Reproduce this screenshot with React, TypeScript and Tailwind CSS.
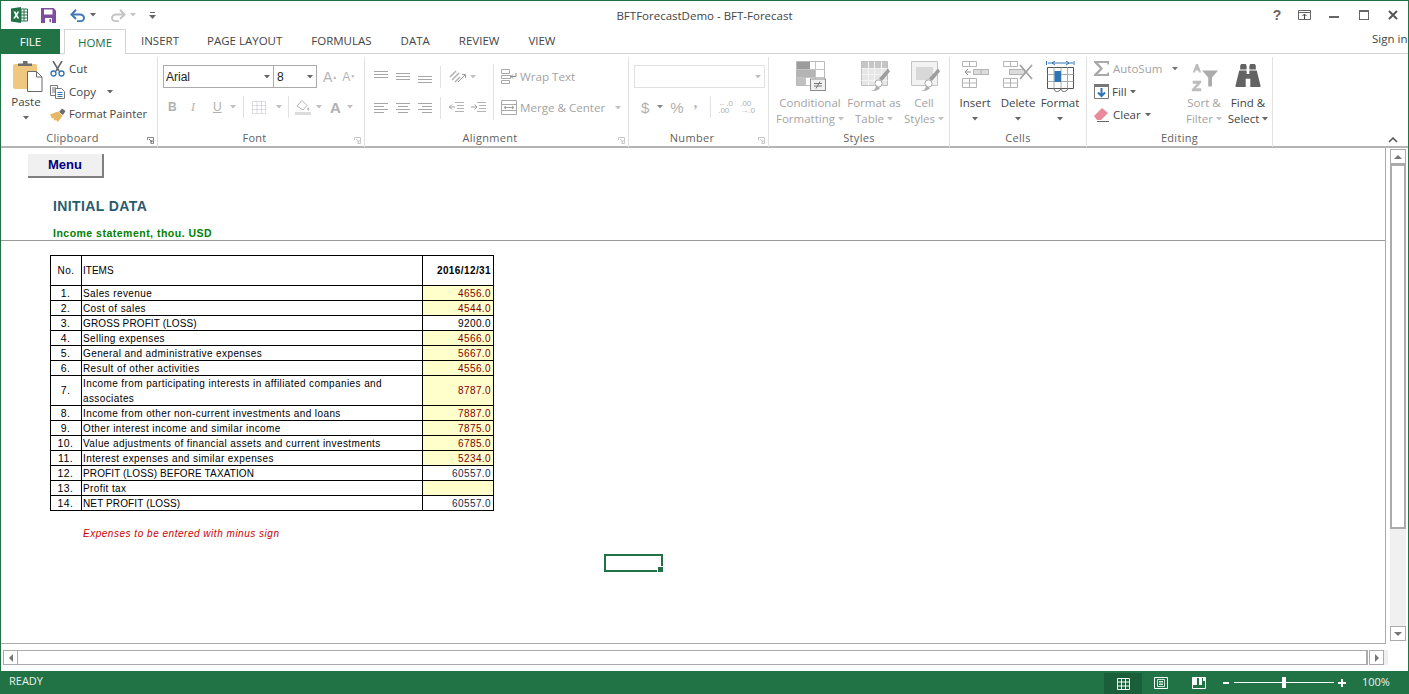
import React from "react";

const UI = "font-['Open_Sans','Noto_Sans',sans-serif]";

const Caret = ({ c = "#8a8a8a", className = "" }: { c?: string; className?: string }) => (
  <svg width="6" height="3.500" viewBox="0 0 7 4" className={"shrink-0 " + className}><path d="M0 0h7L3.500 4z" fill={c} /></svg>
);

const ExcelLogo = () => (
  <svg width="17" height="16" viewBox="0 0 17 16">
    <path d="M0 1.500 10 0v16L0 14.500z" fill="#217346" />
    <path d="M10 2h6.500v12H10z" fill="#fff" stroke="#217346" />
    <path d="M10 5h6.500M10 8h6.500M10 11h6.500M13 2v12" stroke="#217346" />
    <path d="M2.500 4.500h2L5.300 6.500 6.300 4.500h1.900L6.300 8l2 3.500H6.300L5.200 9.400 4.200 11.500h-2L4.300 8z" fill="#fff" />
  </svg>
);
const SaveIcon = () => (
  <svg width="15" height="15" viewBox="0 0 15 15">
    <path d="M0 0h12.500L15 2.500V15H0z" fill="#7e4d9e" />
    <path d="M3 1.500h8.500v5H3z" fill="#fff" />
    <path d="M4 10h7v5H4z" fill="#fff" />
    <path d="M8.500 11h1.500v3H8.500z" fill="#7e4d9e" />
  </svg>
);
const UndoIcon = ({ c }: { c: string }) => (
  <svg width="16" height="13" viewBox="0 0 16 13" fill="none">
    <path d="M2 5.500h8a4 3.400 0 0 1 0 6.800H7" stroke={c} strokeWidth="2" />
    <path d="M6 .8 1.500 5.500 6 10" stroke={c} strokeWidth="2" />
  </svg>
);
const RedoIcon = ({ c }: { c: string }) => (
  <svg width="16" height="13" viewBox="0 0 16 13" fill="none">
    <path d="M14 5.500H6a4 3.400 0 0 0 0 6.800h3" stroke={c} strokeWidth="2" />
    <path d="M10 .8l4.500 4.700L10 10" stroke={c} strokeWidth="2" />
  </svg>
);

const PasteIcon = () => (
  <svg width="30" height="32" viewBox="0 0 30 32">
    <rect x="0" y="3" width="24" height="25" rx="2" fill="#f0c77e" />
    <path d="M5 5V2.500h5V0h4.500v2.500H19V5z" fill="#6d6d6d" />
    <path d="M14.500 10.500h9l5.500 5.500v14.500H14.500z" fill="#fff" stroke="#6a6a6a" />
    <path d="M23.500 10.500v5.500H29" fill="none" stroke="#6a6a6a" />
  </svg>
);
const CutIcon = () => (
  <svg width="15" height="16" viewBox="0 0 15 16" fill="none">
    <path d="M3 0l6 10M12 0 6 10" stroke="#666" strokeWidth="1.600" />
    <circle cx="3.500" cy="12.500" r="2.500" stroke="#2f75b5" strokeWidth="1.300" />
    <circle cx="11.500" cy="12.500" r="2.500" stroke="#2f75b5" strokeWidth="1.300" />
  </svg>
);
const CopyIcon = () => (
  <svg width="15" height="14" viewBox="0 0 15 14" fill="none">
    <path d="M.5.500h7v10h-7z" stroke="#777" fill="#fff" />
    <path d="M2 3h4M2 5h3M2 7h3" stroke="#777" />
    <path d="M5.500 3.500h6l3 3v7h-9z" stroke="#777" fill="#fff" />
    <path d="M7.500 7.500h5M7.500 9.500h5M7.500 11.500h5" stroke="#2f75b5" />
  </svg>
);
const PainterIcon = () => (
  <svg width="16" height="14" viewBox="0 0 16 14">
    <path d="M9 4l3-3.500L15.500 3 13 7z" fill="#6d6d6d" />
    <path d="M0 6.500 8 3.500l4.500 4.500L8 14 6 12l-2 .5L3.500 10 2 10.500z" fill="#e8b765" />
  </svg>
);

const Div = ({ className = "" }: { className?: string }) => <div className={"w-px h-[22px] bg-[#e1e1e1] shrink-0 " + className} />;

const Launcher = ({ faded }: { faded?: boolean }) => (
  <svg width="7" height="7" viewBox="0 0 7 7" className="shrink-0" fill="none">
    <path d="M.5 3V.5H6.500V6.500H3.500" stroke={faded ? "#c8c8c8" : "#8a8a8a"} />
    <path d="M2 2l3 3M3 5h2V3" stroke={faded ? "#c8c8c8" : "#6a6a6a"} />
  </svg>
);

const Group = ({ w, label, launcher, faded, children }: { w: string; label: string; launcher?: boolean; faded?: boolean; children: React.ReactNode }) => (
  <div className={w + " shrink-0 h-[90px] flex flex-col relative border-r border-[#e1e1e1] mt-[3px]"}>
    <div className="h-[73px] overflow-hidden">{children}</div>
    <div className={"h-[17px] flex items-center justify-center text-[11px] leading-none tracking-[0.3px] text-[#5f5f5f] pb-[3px] " + (launcher ? "pr-[13px]" : "")}>{label}</div>
    {launcher && <div className="absolute right-[3px] bottom-[3px]"><Launcher faded={faded} /></div>}
  </div>
);

const Lines = ({ ys, xs }: { ys: number[]; xs: [number, number][] }) => (
  <svg width="15" height="13" viewBox="0 0 15 13">
    {ys.map((y, i) => <rect key={i} x={xs[i][0]} y={y} width={xs[i][1]} height="1" fill="#a6a6a6" />)}
  </svg>
);

const BigLabel = ({ lines, dim, caretInline }: { lines: string[]; dim?: boolean; caretInline?: boolean }) => (
  <div className={"text-[11.5px] leading-[16px] text-center whitespace-nowrap " + (dim ? "text-[#a3a3a3]" : "text-[#444]")}>
    <div>{lines[0]}</div>
    {lines[1] && <div className="flex items-center justify-center gap-[3px]">{lines[1]}{caretInline && <Caret c={dim ? "#c0c0c0" : "#666"} />}</div>}
  </div>
);

const CondIcon = () => (
  <svg width="30" height="30" viewBox="0 0 30 30">
    <g fill="#fff" stroke="#b9b9b9"><path d="M.5.500h28v24H.5z" /></g>
    <path d="M.5 8.500h28M.5 16.500h28M9.500.500v24M19.500.500v24" stroke="#c4c4c4" />
    <rect x="1" y="1" width="13" height="7" fill="#9c9c9c" /><rect x="1" y="9" width="18" height="7" fill="#b4b4b4" /><rect x="1" y="17" width="8" height="7" fill="#c0c0c0" />
    <rect x="14.500" y="18" width="15" height="11.500" fill="#f1f1f1" stroke="#8c8c8c" />
    <path d="M18 22.500h8M18 25h8M24 20.500l-4 7" stroke="#777" fill="none" />
  </svg>
);
const TableIcon = () => (
  <svg width="30" height="30" viewBox="0 0 30 30">
    <path d="M.5.500h26v24H.5z" fill="#e6e6e6" stroke="#bdbdbd" />
    <rect x="1" y="1" width="25" height="6" fill="#c6c6c6" />
    <path d="M.5 7.500h26M.5 13.500h26M.5 19.500h26M7.500.500v24M13.500.500v24M20.500.500v24" stroke="#f4f4f4" />
    <path d="M29 10.500 21 20l-3-2.500L27 7.500z" fill="#9d9d9d" />
    <circle cx="17.500" cy="22.500" r="3.600" fill="#fff" stroke="#a8a8a8" />
    <path d="M9 30c5 0 6-4 6-6l4 3c-2 3-6 3-10 3z" fill="#b0b0b0" />
  </svg>
);
const StylesIcon = () => (
  <svg width="30" height="30" viewBox="0 0 30 30">
    <path d="M.5.500h26v24H.5z" fill="#f2f2f2" stroke="#c4c4c4" />
    <rect x="5" y="6" width="17" height="13" fill="#d8d8d8" />
    <path d="M29 10.500 21 20l-3-2.500L27 7.500z" fill="#9d9d9d" />
    <circle cx="17.500" cy="22.500" r="3.600" fill="#fff" stroke="#a8a8a8" />
    <path d="M9 30c5 0 6-4 6-6l4 3c-2 3-6 3-10 3z" fill="#b0b0b0" />
  </svg>
);
const InsertIcon = () => (
  <svg width="27" height="27" viewBox="0 0 27 27" fill="none">
    <path d="M.5.500h14v5H.5zM7.500.500v5M.5 17.500h14v9H.5zM.5 22h14M7.500 17.500v9" stroke="#b5b5b5" />
    <rect x="11.500" y="8.500" width="15" height="5" fill="#dcdcdc" stroke="#b5b5b5" />
    <path d="M19 9v4" stroke="#b5b5b5" />
    <path d="M3 11h6M6 8 3 11l3 3" stroke="#8f8f8f" />
  </svg>
);
const DeleteIcon = () => (
  <svg width="30" height="27" viewBox="0 0 30 27" fill="none">
    <path d="M.5.500h14v5H.5zM7.500.500v5M.5 17.500h14v9H.5zM.5 22h14M7.500 17.500v9" stroke="#b5b5b5" />
    <rect x="6.500" y="8.500" width="15" height="5" fill="#dcdcdc" stroke="#b5b5b5" />
    <path d="M17 4l12 14M29 4 17 18" stroke="#a3a3a3" strokeWidth="1.800" />
  </svg>
);
const FormatIcon = () => (
  <svg width="29" height="33" viewBox="0 0 29 33" fill="none">
    <path d="M.5 0v4M28 0v4M2 2h25" stroke="#2f75b5" />
    <path d="M6 2l3-2M6 2l3 2M23 2l-3-2M23 2l-3 2" stroke="#2f75b5" />
    <path d="M1.500 6.500h26v21h-26z" stroke="#555" fill="#fff" />
    <path d="M1.500 13.500h26M1.500 20.500h26M8 6.500v21M15 6.500v21M21.500 6.500v21" stroke="#aaa" />
    <rect x="8.500" y="10" width="6.500" height="11" fill="#2f75b5" />
    <path d="M8 28c1 3 3 3 5 2l2-2M15 28c1 3 3 3 5 2l2-2" stroke="#666" />
  </svg>
);
const Funnel = () => (
  <svg width="30" height="30" viewBox="0 0 32 30">
    <path d="M4 9 7.500 0h2L13 9h-2.500l-.6-2H7l-.6 2z" fill="#bdbdbd" />
    <path d="M4 18h9v2l-5.500 6H13v3H3v-2l5.500-6H4z" fill="#bdbdbd" />
    <path d="M14 7h17l-6.500 7.500V24h-4v-9.500z" fill="#ababab" />
  </svg>
);
const Binoc = () => (
  <svg width="26" height="23" viewBox="0 0 27 25" fill="#636363">
    <path d="M5 2l1-2h5l1 2v4H5zM15 2l1-2h5l1 2v4h-7z" />
    <path d="M4 7h8v4h3V7h8l4 16v2H16v-9h-5v9H0v-2z" />
  </svg>
);
const Sigma = () => <svg width="16" height="15" viewBox="0 0 16 15"><path d="M0 0h15v3.500h-1.500L13 2H4l5 5.500L4 13h9l.5-1.500H15V15H0v-1.500L6 7.500 0 1.500z" fill="#a9a9a9" /></svg>;
const FillIcon = () => (
  <svg width="15" height="15" viewBox="0 0 15 15" fill="none">
    <path d="M.5.500h14v14H.5z" stroke="#777" fill="#fff" /><rect x="0" y="0" width="15" height="3" fill="#777" />
    <path d="M7.500 4v8M4 8.500l3.500 3.500L11 8.500" stroke="#2f75b5" strokeWidth="2" />
  </svg>
);
const Eraser = () => (
  <svg width="15" height="14" viewBox="0 0 15 14">
    <path d="M0 8 8 0l6 5-7 7H3z" fill="#e88a9c" /><path d="M3 13.500h12" stroke="#666" />
  </svg>
);

const rows: [string, string, string, string, number?][] = [
  ["1.", "Sales revenue", "4656.0", "i"],
  ["2.", "Cost of sales", "4544.0", "i"],
  ["3.", "GROSS PROFIT (LOSS)", "9200.0", "k"],
  ["4.", "Selling expenses", "4566.0", "i"],
  ["5.", "General and administrative expenses", "5667.0", "i"],
  ["6.", "Result of other activities", "4556.0", "i"],
  ["7.", "Income from participating interests in affiliated companies and associates", "8787.0", "i", 30],
  ["8.", "Income from other non-current investments and loans", "7887.0", "i"],
  ["9.", "Other interest income and similar income", "7875.0", "i"],
  ["10.", "Value adjustments of financial assets and current investments", "6785.0", "i"],
  ["11.", "Interest expenses and similar expenses", "5234.0", "i"],
  ["12.", "PROFIT (LOSS) BEFORE TAXATION", "60557.0", "n"],
  ["13.", "Profit tax", "", "i"],
  ["14.", "NET PROFIT (LOSS)", "60557.0", "n"],
];

const td = "border border-black p-0";
const valueClass: Record<string, string> = {
  i: "bg-[#ffffcc] text-[#800000]",
  k: "text-black",
  n: "text-[#1a2a4a]",
};

function DataTable() {
  return (
    <table className="table-fixed border-collapse w-[443px] text-[10px] leading-[13px] text-black tracking-[0.4px] font-['Liberation_Sans',Arial,sans-serif]">
      <colgroup><col className="w-[31px]" /><col className="w-[341px]" /><col className="w-[71px]" /></colgroup>
      <tbody>
        <tr className="h-[30px]">
          <td className={td + " text-center"}>No.</td>
          <td className={td + " pl-[1px] tracking-normal"}>ITEMS</td>
          <td className={td + " text-right pr-[2px] font-bold"}>2016/12/31</td>
        </tr>
        {rows.map(([n, t, v, kind, h]) => (
          <tr key={n} className={h ? "h-[30px]" : "h-[15px]"}>
            <td className={td + " text-center text-[10.5px] pr-px " + (h ? "" : "pt-px")}>{n}</td>
            <td className={td + " pl-[1px] pr-[30px] " + (h ? "leading-[14.5px]" : "pt-px ") + (kind === "i" ? "" : "tracking-[0.12px]")}>
              {h ? <span className="block translate-y-px">{t}</span> : t}
            </td>
            <td className={td + " text-right pr-[2px] " + (h ? "" : "pt-px ") + valueClass[kind]}>{v}</td>
          </tr>
        ))}
      </tbody>
    </table>
  );
}

export default function App() {
  return (
    <div className={"w-[1409px] h-[694px] flex flex-col bg-white overflow-hidden " + UI}>
      <div className="flex-1 min-h-0 flex flex-col border-x border-t border-[#217346]">
        {/* title bar */}
        <div className="h-[28px] shrink-0 flex items-center relative pl-[10px]">
          <ExcelLogo />
          <div className="ml-[13px]"><SaveIcon /></div>
          <div className="ml-[14px]"><UndoIcon c="#3f78b5" /></div>
          <Caret c="#666" className="ml-[4px]" />
          <div className="ml-[14px]"><RedoIcon c="#c4c4c4" /></div>
          <Caret c="#c4c4c4" className="ml-[4px]" />
          <svg width="7" height="7" viewBox="0 0 7 7" className="ml-[13px]"><path d="M1 0h5v1H1zM0 3h7L3.500 7z" fill="#666" /></svg>
          <div className="absolute left-0 right-0 top-[7px] text-center text-[11.5px] leading-[16px] text-[#444] pointer-events-none">BFTForecastDemo - BFT-Forecast</div>
          <div className="ml-auto flex items-center text-[#666]">
            <span className="text-[14px] font-bold leading-none w-[14px] text-center font-['Liberation_Sans',sans-serif]">?</span>
            <svg width="13" height="10" viewBox="0 0 13 10" className="ml-[14px]" fill="none"><path d="M.5.500h12v9H.5z" stroke="#666" /><path d="M.5 2.500h12" stroke="#666" /><path d="M6.500 9V4.500M4.500 6l2-2 2 2" stroke="#444" /></svg>
            <div className="ml-[18px] w-[10px] h-[2px] bg-[#666] mt-[3px]" />
            <div className="ml-[20px] w-[10px] h-[10px] border border-[#666] border-t-[2px]" />
            <svg width="10" height="10" viewBox="0 0 10 10" className="ml-[19px] mr-[10px]"><path d="M1 1l8 8M9 1 1 9" stroke="#555" strokeWidth="2" /></svg>
          </div>
        </div>

        {/* tabs */}
        <div className="h-[25px] shrink-0 flex items-end text-[11.5px] text-[#444] border-b border-[#d4d4d4] relative">
          <div className="w-[59px] h-[25px] pt-px bg-[#217346] text-white flex items-center justify-center -mb-px">FILE</div>
          <div className="ml-[4px] w-[62px] h-[25px] pt-px border-x border-t border-[#d4d4d4] bg-white text-[#217346] flex items-center justify-center -mb-px">HOME</div>
          <div className="h-[25px] pt-px flex items-center">
            <span className="ml-[15px]">INSERT</span>
            <span className="ml-[28px]">PAGE LAYOUT</span>
            <span className="ml-[29px]">FORMULAS</span>
            <span className="ml-[29px]">DATA</span>
            <span className="ml-[29px]">REVIEW</span>
            <span className="ml-[29px]">VIEW</span>
          </div>
          <span className="ml-auto h-[25px] w-[36px] pb-[4px] overflow-hidden whitespace-nowrap flex items-center leading-none">Sign in</span>
        </div>

        {/* ribbon */}
        <div className="h-[94px] shrink-0 flex items-start border-b-2 border-[#b4b4b4] relative">
          <Group w="w-[157px]" label="Clipboard" launcher>
            <div className="flex h-full pl-[8px]">
              <div className="w-[34px] flex flex-col items-center pt-[4px]">
                <div className="ml-[3px]"><PasteIcon /></div>
                <div className="text-[11.5px] leading-[16px] text-[#444] mt-[1px]">Paste</div>
                <Caret c="#666" className="mt-[6px]" />
              </div>
              <div className="ml-[7px] flex flex-col text-[11.5px] text-[#444]">
                <div className="h-[23px] flex items-center gap-[4px]"><CutIcon />Cut</div>
                <div className="h-[23px] flex items-center gap-[4px]"><CopyIcon />Copy<Caret c="#666" className="ml-[7px]" /></div>
                <div className="h-[23px] flex items-center gap-[3px] whitespace-nowrap text-[11.2px]"><PainterIcon />Format Painter</div>
              </div>
            </div>
          </Group>

          <Group w="w-[207px]" label="Font" launcher faded>
            <div className="pt-[8px] pl-[5px]">
              <div className="flex items-center">
                <div className="w-[111px] h-[23px] border border-[#ababab] flex items-center justify-between pl-[2px] pr-[3px] text-[12px] text-[#222] font-['Liberation_Sans',sans-serif]">Arial<Caret c="#666" /></div>
                <div className="w-[43px] h-[23px] border border-[#ababab] border-l-0 flex items-center justify-between pl-[3px] pr-[3px] text-[12px] text-[#222] font-['Liberation_Sans',sans-serif]">8<Caret c="#666" /></div>
                <span className="ml-[6px] text-[14px] text-[#b4b4b4] font-['Liberation_Sans',sans-serif] leading-none">A<sup className="text-[5px]">▲</sup></span>
                <span className="ml-[5px] text-[12px] text-[#b4b4b4] font-['Liberation_Sans',sans-serif] leading-none">A<sup className="text-[5px]">▼</sup></span>
              </div>
              <div className="flex items-center h-[22px] mt-[8px] text-[#b0b0b0] font-['Liberation_Sans',sans-serif] text-[12px]">
                <span className="w-[10px] ml-[5px] font-bold">B</span>
                <span className="w-[10px] ml-[13px] italic font-['Liberation_Serif',serif]">I</span>
                <span className="w-[10px] ml-[12px] underline">U</span>
                <Caret c="#c0c0c0" className="ml-[7px]" />
                <Div className="ml-[7px]" />
                <svg width="14" height="13" viewBox="0 0 14 13" className="ml-[8px]" fill="none"><path d="M.5.500h13v12H.5zM5 .5v12M9.500.5v12M.5 4.500h13M.5 8.500h13" stroke="#c0b8c8" strokeDasharray="1 1" /></svg>
                <Caret c="#c0c0c0" className="ml-[10px]" />
                <Div className="ml-[6px]" />
                <svg width="16" height="16" viewBox="0 0 16 16" className="ml-[6px]"><path d="M2 7 7 1.500l5 5-4 4.500z" fill="#fff" stroke="#b4b4b4" /><path d="M13 8c1 1.500 2 3 .5 3.500C12 11.500 12 9.500 13 8z" fill="#b4b4b4" /><rect y="13" width="16" height="3" fill="#dcdcdc" /></svg>
                <Caret c="#c0c0c0" className="ml-[5px]" />
                <span className="ml-[8px] text-[15px] font-bold leading-none">A</span>
                <Caret c="#c0c0c0" className="ml-[6px]" />
              </div>
            </div>
          </Group>

          <Group w="w-[264px]" label="Alignment" launcher faded>
            <div className="pt-[7px] pl-[9px] flex">
              <div className="flex flex-col">
                <div className="flex items-center h-[25px]">
                  <Lines ys={[1, 4, 7]} xs={[[0, 14], [0, 14], [0, 14]]} />
                  <div className="ml-[7px]"><Lines ys={[3, 6, 9]} xs={[[0, 14], [0, 14], [0, 14]]} /></div>
                  <div className="ml-[7px]"><Lines ys={[6, 9, 12]} xs={[[0, 14], [0, 14], [0, 14]]} /></div>
                  <Div className="ml-[7px]" />
                  <svg width="18" height="14" viewBox="0 0 18 14" className="ml-[8px]" fill="none"><path d="M1 7 7 1M3 10l7-7M6 12l5-5" stroke="#b0b0b0" strokeWidth="1.500" /><path d="M9 12 16 5M13 4.500h3.500V8" stroke="#9a9a9a" /></svg>
                  <Caret c="#c0c0c0" className="ml-[3px]" />
                </div>
                <div className="flex items-center h-[25px] mt-[6px]">
                  <Lines ys={[2, 5, 8, 11]} xs={[[0, 14], [0, 10], [0, 14], [0, 10]]} />
                  <div className="ml-[7px]"><Lines ys={[2, 5, 8, 11]} xs={[[0, 14], [2, 10], [0, 14], [2, 10]]} /></div>
                  <div className="ml-[7px]"><Lines ys={[2, 5, 8, 11]} xs={[[0, 14], [4, 10], [0, 14], [4, 10]]} /></div>
                  <Div className="ml-[7px]" />
                  <svg width="15" height="11" viewBox="0 0 15 11" className="ml-[8px]" fill="none"><path d="M6 .5h9M8 3.500h7M8 6.500h7M6 9.500h9" stroke="#b4b4b4" /><path d="M0 5h6M3 2.500 .5 5 3 7.500" stroke="#a0a0a0" /></svg>
                  <svg width="15" height="11" viewBox="0 0 15 11" className="ml-[7px]" fill="none"><path d="M6 .5h9M8 3.500h7M8 6.500h7M6 9.500h9" stroke="#b4b4b4" /><path d="M0 5h6M3.500 2.500 6 5 3.500 7.500" stroke="#a0a0a0" /></svg>
                </div>
              </div>
              <div className="ml-[7px] w-px h-[56px] bg-[#e1e1e1]" />
              <div className="ml-[7px] flex flex-col text-[11.6px] text-[#a3a3a3] whitespace-nowrap">
                <div className="flex items-center h-[25px] gap-[3px]">
                  <svg width="16" height="15" viewBox="0 0 16 15" fill="none"><path d="M.5.500h8v4h-8zM.5 6.500h9v3h-9zM.5 11.500h8v3h-8z" stroke="#a8a8a8" /><path d="M15 4v3.500h-5M12 5.500l-2 2 2 2" stroke="#8a8a8a" /></svg>
                  Wrap Text
                </div>
                <div className="flex items-center h-[25px] mt-[6px] gap-[3px]">
                  <svg width="16" height="15" viewBox="0 0 16 15" fill="none"><path d="M.5.500h15v14H.5zM.5 4.500h15M.5 10.500h15" stroke="#aaa" /><path d="M3 7.500h10M5 6l-2 1.500L5 9M11 6l2 1.500L11 9" stroke="#a0a0a0" /></svg>
                  Merge &amp; Center
                  <Caret c="#c0c0c0" className="ml-[7px]" />
                </div>
              </div>
            </div>
          </Group>

          <Group w="w-[140px]" label="Number" launcher faded>
            <div className="pt-[8px] pl-[5px]">
              <div className="w-[131px] h-[23px] border border-[#e1e1e1] flex items-center justify-end pr-[3px]"><Caret c="#c0c0c0" /></div>
              <div className="flex items-center h-[22px] mt-[8px] text-[#b0b0b0]">
                <span className="text-[15px] ml-[7px] leading-none font-['Liberation_Sans',sans-serif]">$</span>
                <Caret c="#8a8a8a" className="ml-[8px]" />
                <span className="text-[15px] ml-[7px] leading-none font-['Liberation_Sans',sans-serif]">%</span>
                <span className="text-[14px] ml-[10px] mb-[8px] font-bold leading-none font-['Liberation_Serif',serif]">,</span>
                <Div className="ml-[13px]" />
                <span className="ml-[7px] text-[8px] leading-[7px] w-[16px] font-['Liberation_Sans',sans-serif] whitespace-nowrap">←.0<br />.00</span>
                <span className="ml-[6px] text-[8px] leading-[7px] w-[16px] font-['Liberation_Sans',sans-serif] whitespace-nowrap">.00<br />→.0</span>
              </div>
            </div>
          </Group>

          <Group w="w-[181px]" label="Styles">
            <div className="flex pl-[7px] pt-[4px]">
              <div className="w-[68px] flex flex-col items-center"><div className="ml-[2px]"><CondIcon /></div><div className="mt-[4px]"><BigLabel lines={["Conditional", "Formatting"]} dim caretInline /></div></div>
              <div className="w-[54px] ml-[3px] flex flex-col items-center"><div className="ml-[4px]"><TableIcon /></div><div className="mt-[4px]"><BigLabel lines={["Format as", "Table"]} dim caretInline /></div></div>
              <div className="w-[44px] ml-[1px] flex flex-col items-center"><div className="ml-[4px]"><StylesIcon /></div><div className="mt-[4px]"><BigLabel lines={["Cell", "Styles"]} dim caretInline /></div></div>
            </div>
          </Group>

          <Group w="w-[137px]" label="Cells">
            <div className="flex pl-[6px] pt-[4px] text-[11.5px] text-[#444]">
              <div className="w-[38px] flex flex-col items-center"><div className="h-[30px]"><InsertIcon /></div><div className="mt-[4px] leading-[16px]">Insert</div><Caret c="#666" className="mt-[6px]" /></div>
              <div className="w-[48px] flex flex-col items-center"><div className="h-[30px]"><DeleteIcon /></div><div className="mt-[4px] leading-[16px]">Delete</div><Caret c="#666" className="mt-[6px]" /></div>
              <div className="w-[36px] flex flex-col items-center"><div className="h-[30px]"><FormatIcon /></div><div className="mt-[4px] leading-[16px]">Format</div><Caret c="#666" className="mt-[6px]" /></div>
            </div>
          </Group>

          <Group w="w-[186px]" label="Editing">
            <div className="flex pl-[7px]">
              <div className="w-[88px] flex flex-col text-[11.5px]">
                <div className="h-[23px] flex items-center gap-[3px] text-[#a3a3a3]"><Sigma />AutoSum<Caret c="#777" className="ml-[7px]" /></div>
                <div className="h-[23px] flex items-center gap-[3px] text-[#444]"><FillIcon />Fill<Caret c="#666" /></div>
                <div className="h-[23px] flex items-center gap-[4px] text-[#444]"><Eraser />Clear<Caret c="#666" /></div>
              </div>
              <div className="w-[44px] flex flex-col items-center pt-[6px]"><Funnel /><div className="mt-[2px]"><BigLabel lines={["Sort &", "Filter"]} dim caretInline /></div></div>
              <div className="w-[44px] flex flex-col items-center pt-[7px]"><Binoc /><div className="mt-[8px]"><BigLabel lines={["Find &", "Select"]} caretInline /></div></div>
            </div>
          </Group>

          <svg width="10" height="6" viewBox="0 0 10 6" className="absolute right-[10px] bottom-[3px]" fill="none"><path d="M1 5l4-4 4 4" stroke="#555" strokeWidth="1.500" /></svg>
        </div>

        {/* sheet */}
        <div className="flex-1 min-h-0 flex flex-col">
          <div className="flex-1 min-h-0 flex">
            <div className="w-[1385px] shrink-0 border-r border-b border-[#ababab] relative font-['Liberation_Sans',Arial,sans-serif]">
              <div className="pl-[27px] pt-[6px]">
                <div className="w-[76px] h-[24px] bg-[#f0f0f0] border-r-2 border-b-2 border-[#808080] flex items-center justify-center text-[13px] font-bold text-[#000080]">Menu</div>
              </div>
              <div className="pl-[52px] mt-[19px] text-[14px] leading-[18px] tracking-[0.4px] font-bold text-[#2b5b70]">INITIAL DATA</div>
              <div className="pl-[52px] mt-[12px] text-[10.5px] leading-[13px] tracking-[0.49px] font-bold text-[#008000]">Income statement, thou. USD</div>
              <div className="h-px bg-[#999]" />
              <div className="pl-[49px] mt-[14px]"><DataTable /></div>
              <div className="pl-[82px] mt-[16px] text-[10px] leading-[14px] italic tracking-[0.52px] text-[#cc0000]">Expenses to be entered with minus sign</div>
              <div className="absolute left-[603px] top-[406px] w-[59px] h-[18px] border-2 border-[#217346]">
                <div className="absolute -right-[3px] -bottom-[3px] w-[5px] h-[5px] bg-[#217346] border border-white box-content" />
              </div>
            </div>
            <div className="w-[16px] ml-[4px] shrink-0 flex flex-col mt-[1px] mb-[3px]">
              <div className="h-[15px] border border-[#ababab] flex items-center justify-center"><svg width="8" height="4" viewBox="0 0 8 4"><path d="M4 0l4 4H0z" fill="#777" /></svg></div>
              <div className="h-[365px] border-2 border-[#ababab] bg-white" />
              <div className="flex-1 bg-[#f0f0f0]" />
              <div className="h-[15px] border border-[#ababab] flex items-center justify-center"><svg width="8" height="4" viewBox="0 0 8 4"><path d="M0 0h8L4 4z" fill="#777" /></svg></div>
            </div>
          </div>
          <div className="h-[27px] shrink-0 flex items-start pt-[6px] pl-[2px]">
            <div className="w-[15px] h-[15px] border border-[#ababab] flex items-center justify-center"><svg width="4" height="8" viewBox="0 0 4 8"><path d="M4 0v8L0 4z" fill="#777" /></svg></div>
            <div className="w-[1350px] h-[15px] border border-l-0 border-r-2 border-[#ababab]" />
            <div className="ml-[1px] w-[15px] h-[15px] border border-[#ababab] flex items-center justify-center"><svg width="4" height="8" viewBox="0 0 4 8"><path d="M0 0v8l4-4z" fill="#777" /></svg></div>
            <div className="w-[4px] h-[15px] bg-[#f0f0f0]" />
          </div>
        </div>
      </div>

      {/* status bar */}
      <div className="h-[23px] shrink-0 bg-[#217346] flex items-center text-[11px] text-[#e8f1ec] pl-[9px]">
        <span className="pb-[2px]">READY</span>
        <div className="ml-auto flex items-center h-full">
          <div className="w-[38px] h-[21px] bg-[#1a5f39] flex items-center justify-center mt-[2px]">
            <svg width="13" height="12" viewBox="0 0 13 12" fill="none"><path d="M.5.500h12v11H.5zM.5 4h12M.5 8h12M4.500.500v11M8.500.500v11" stroke="#fff" /></svg>
          </div>
          <svg width="14" height="12" viewBox="0 0 14 12" className="ml-[12px]" fill="none"><path d="M.5.500h13v11H.5z" stroke="#fff" /><path d="M3.500 2.500h7v7h-7zM5 4.500h4M5 6h4M5 7.500h4" stroke="#fff" strokeWidth=".8" /></svg>
          <svg width="14" height="12" viewBox="0 0 14 12" className="ml-[24px]" fill="none"><path d="M.5.500h13v11H.5z" stroke="#fff" /><rect x="1" y="1" width="4" height="7" fill="#fff" /><rect x="7" y="1" width="3" height="7" fill="#fff" /><rect x="11" y="1" width="2" height="3" fill="#fff" /></svg>
          <div className="ml-[17px] w-[6px] h-[2px] bg-white" />
          <div className="ml-[5px] w-[100px] h-px bg-white relative"><div className="absolute left-[48px] -top-[5px] w-[4px] h-[11px] bg-white" /></div>
          <svg width="8" height="8" viewBox="0 0 8 8" className="ml-[4px]"><path d="M3 0h2v3h3v2H5v3H3V5H0V3h3z" fill="#fff" /></svg>
          <span className="ml-[16px] mr-[17px] w-[30px] text-[11px]">100%</span>
        </div>
      </div>
    </div>
  );
}
